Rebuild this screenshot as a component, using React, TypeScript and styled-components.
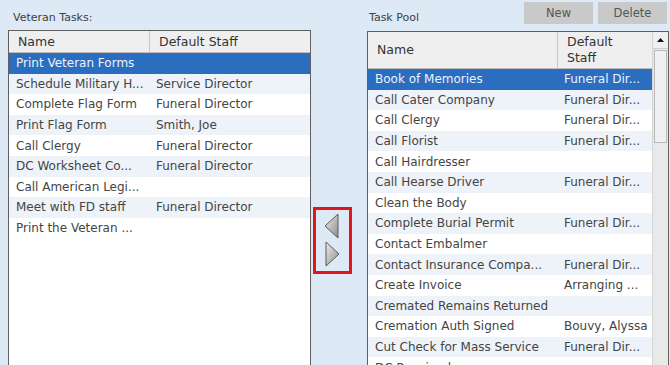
import React from "react";
import styled, { createGlobalStyle } from "styled-components";

const GlobalStyle = createGlobalStyle`
  html, body {
    margin: 0;
    padding: 0;
    background: #dde9f5;
    overflow: hidden;
  }
  body {
    font-family: "DejaVu Sans", "Liberation Sans", sans-serif;
    font-size: 12px;
    color: #3f3f3f;
  }
`;

type Row = { name: string; staff: string };

const veteranTasks: Row[] = [
  { name: "Print Veteran Forms", staff: "" },
  { name: "Schedule Military H...", staff: "Service Director" },
  { name: "Complete Flag Form", staff: "Funeral Director" },
  { name: "Print Flag Form", staff: "Smith, Joe" },
  { name: "Call Clergy", staff: "Funeral Director" },
  { name: "DC Worksheet Co...", staff: "Funeral Director" },
  { name: "Call American Legi...", staff: "" },
  { name: "Meet with FD staff", staff: "Funeral Director" },
  { name: "Print the Veteran ...", staff: "" },
];

const poolTasks: Row[] = [
  { name: "Book of Memories", staff: "Funeral Dir..." },
  { name: "Call Cater Company", staff: "Funeral Dir..." },
  { name: "Call Clergy", staff: "Funeral Dir..." },
  { name: "Call Florist", staff: "Funeral Dir..." },
  { name: "Call Hairdresser", staff: "" },
  { name: "Call Hearse Driver", staff: "Funeral Dir..." },
  { name: "Clean the Body", staff: "" },
  { name: "Complete Burial Permit", staff: "Funeral Dir..." },
  { name: "Contact Embalmer", staff: "" },
  { name: "Contact Insurance Compa...", staff: "Funeral Dir..." },
  { name: "Create Invoice", staff: "Arranging ..." },
  { name: "Cremated Remains Returned", staff: "" },
  { name: "Cremation Auth Signed", staff: "Bouvy, Alyssa" },
  { name: "Cut Check for Mass Service", staff: "Funeral Dir..." },
  { name: "DC Received", staff: "" },
];

const Page = styled.div`
  display: flex;
  height: 365px;
  overflow: hidden;
`;

const LeftPanel = styled.div`
  width: 303px;
  margin-left: 8px;
  display: flex;
  flex-direction: column;
`;

const RightPanel = styled.div`
  width: 302px;
  display: flex;
  flex-direction: column;
`;

const Caption = styled.div`
  height: 30px;
  flex-shrink: 0;
  box-sizing: border-box;
  padding: 11px 0 0 5px;
  font-size: 11px;
  line-height: 14px;
  color: #404040;
`;

const TopBar = styled.div`
  height: 31px;
  flex-shrink: 0;
  display: flex;
  align-items: flex-start;
`;

const PoolCaption = styled(Caption)`
  flex: 1;
  padding-left: 2px;
  padding-top: 11px;
`;

const Buttons = styled.div`
  display: flex;
  gap: 5px;
  padding: 2px 2px 0 0;
`;

const Button = styled.button`
  width: 69px;
  height: 22px;
  border: none;
  background: #c9c9c9;
  color: #555;
  font-family: inherit;
  font-size: 11.5px;
  padding: 0;
`;

const Grid = styled.div`
  flex: 1;
  border: 1px solid #5f5f5f;
  border-bottom: none;
  background: #fff;
  display: flex;
  overflow: hidden;
`;

const GridBody = styled.div`
  flex: 1;
  display: flex;
  flex-direction: column;
  min-width: 0;
`;

const HeaderRow = styled.div<{ $tall?: boolean }>`
  display: grid;
  flex-shrink: 0;
  grid-template-columns: ${(p) => (p.$tall ? "189px 1fr" : "140px 1fr")};
  height: ${(p) => (p.$tall ? "37px" : "22px")};
  background: #efefef;
  border-bottom: 1px solid #bdbdbd;
  box-sizing: border-box;
  font-size: 12.5px;
  color: #333;
`;

const HeaderCell = styled.div`
  display: flex;
  align-items: center;
  padding-left: 9px;
  line-height: 16px;
  & + & {
    border-left: 1px solid #c6c6c6;
  }
`;

const DataRow = styled.div<{ $cols: string; $selected?: boolean; $alt?: boolean }>`
  display: grid;
  grid-template-columns: ${(p) => p.$cols};
  height: 20.6px;
  align-items: center;
  flex-shrink: 0;
  background: ${(p) => (p.$selected ? "#2b6dbf" : p.$alt ? "#eef3f9" : "#fff")};
  color: ${(p) => (p.$selected ? "#eef3fb" : "#444")};
`;

const Cell = styled.div`
  padding-left: 7px;
  white-space: nowrap;
  overflow: hidden;
`;

const Middle = styled.div`
  width: 56px;
  padding: 207px 0 0 2px;
  box-sizing: border-box;
`;

const MoveBox = styled.div`
  width: 39px;
  height: 67px;
  box-sizing: border-box;
  border: 3px solid #e3151b;
  display: flex;
  align-items: center;
  justify-content: center;
`;

const ScrollBar = styled.div`
  width: 16px;
  border-left: 1px solid #d4d4d4;
  background: #e9e9e9;
  display: flex;
  flex-direction: column;
  box-sizing: border-box;
`;

const ScrollArrow = styled.div`
  height: 16px;
  display: flex;
  align-items: center;
  justify-content: center;
  background: #f0f0f0;
  border-bottom: 1px solid #cfcfcf;
`;

const ScrollThumb = styled.div`
  height: 91px;
  margin: 1px 1px 0 1px;
  background: #f0f0f0;
  border: 1px solid #b9b9b9;
`;

const Arrows = () => (
  <svg width="20" height="56" viewBox="0 0 20 56">
    <defs>
      <linearGradient id="tri" x1="0" y1="0" x2="1" y2="1">
        <stop offset="0" stopColor="#ececec" />
        <stop offset="1" stopColor="#8c8c8c" />
      </linearGradient>
    </defs>
    <polygon points="15,1 15,25 2,13" fill="url(#tri)" stroke="#5a5a5a" strokeWidth="1" />
    <polygon points="3,29 3,53 16,41" fill="url(#tri)" stroke="#5a5a5a" strokeWidth="1" />
  </svg>
);

const App: React.FC = () => {
  return (
    <>
      <GlobalStyle />
      <Page>
        <LeftPanel>
          <Caption>Veteran Tasks:</Caption>
          <Grid>
            <GridBody>
              <HeaderRow>
                <HeaderCell>Name</HeaderCell>
                <HeaderCell>Default Staff</HeaderCell>
              </HeaderRow>
              {veteranTasks.map((r, i) => (
                <DataRow key={r.name} $cols="140px 1fr" $selected={i === 0} $alt={i % 2 === 1}>
                  <Cell>{r.name}</Cell>
                  <Cell>{r.staff}</Cell>
                </DataRow>
              ))}
            </GridBody>
          </Grid>
        </LeftPanel>
        <Middle>
          <MoveBox>
            <Arrows />
          </MoveBox>
        </Middle>
        <RightPanel>
          <TopBar>
            <PoolCaption>Task Pool</PoolCaption>
            <Buttons>
              <Button>New</Button>
              <Button>Delete</Button>
            </Buttons>
          </TopBar>
          <Grid>
            <GridBody>
              <HeaderRow $tall>
                <HeaderCell>Name</HeaderCell>
                <HeaderCell>
                  Default
                  <br />
                  Staff
                </HeaderCell>
              </HeaderRow>
              {poolTasks.map((r, i) => (
                <DataRow key={r.name} $cols="189px 1fr" $selected={i === 0} $alt={i % 2 === 1}>
                  <Cell>{r.name}</Cell>
                  <Cell>{r.staff}</Cell>
                </DataRow>
              ))}
            </GridBody>
            <ScrollBar>
              <ScrollArrow>
                <svg width="7" height="4" viewBox="0 0 7 4">
                  <polygon points="0,4 7,4 3.5,0" fill="#111" />
                </svg>
              </ScrollArrow>
              <ScrollThumb />
            </ScrollBar>
          </Grid>
        </RightPanel>
      </Page>
    </>
  );
};

export default App;
